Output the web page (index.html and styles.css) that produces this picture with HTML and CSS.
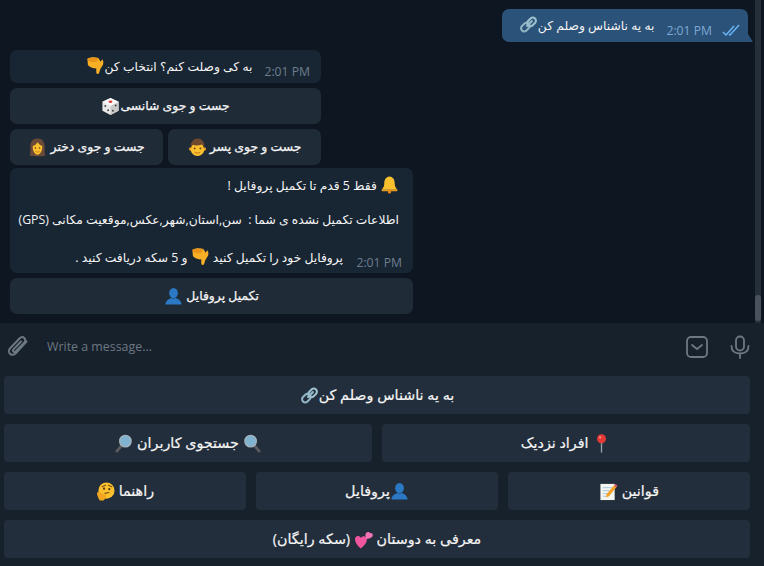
FILE: index.html
```html
<!DOCTYPE html>
<html lang="fa">
<head>
<meta charset="utf-8">
<title>Chat</title>
<link rel="stylesheet" href="styles.css">
</head>
<body>
<svg class="defs" width="0" height="0" aria-hidden="true">
  <defs>
    <symbol id="e-link" viewBox="0 0 20 20">
      <g fill="none" stroke-linecap="round">
        <path d="M8.5 11.5 L13.5 6.5" stroke="#8fb4c4" stroke-width="2.4"/>
        <rect x="1.7" y="9.5" width="10" height="6.6" rx="3.3" transform="rotate(-45 6.7 12.8)" stroke="#8fb4c4" stroke-width="2.2"/>
        <rect x="8.3" y="3.9" width="10" height="6.6" rx="3.3" transform="rotate(-45 13.3 7.2)" stroke="#9cc0ce" stroke-width="2.2"/>
      </g>
    </symbol>
    <symbol id="e-down" viewBox="0 0 20 20">
      <path d="M1.500 3 C5 1 10 1 13 2 L15.500 6 L17 3.500 C18.500 5 18.500 7 18 9 L15 14 L13.800 18 C12.800 19.500 10.800 19 10.800 17 L10.800 13 C7 13.500 3.500 11.500 2 9.500 Z" fill="#f7b026"/>
      <path d="M1.500 3 C5 1.500 10 1.500 12.800 2.500 L11 6 C8 7 4.500 6.500 2 5 Z" fill="#e8941a"/>
    </symbol>
    <symbol id="e-dice" viewBox="0 0 20 20">
      <path d="M10 1 L18.500 5 L18.500 14.500 L10 19 L1.500 14.500 L1.500 5 Z" fill="#e8e8e8"/>
      <path d="M10 9.500 L18.500 5 L18.500 14.500 L10 19 Z" fill="#c9c9c9"/>
      <path d="M10 1 L18.500 5 L10 9.500 L1.500 5 Z" fill="#f7f7f7"/>
      <ellipse cx="10" cy="5" rx="2" ry="1.300" fill="#d8443c"/>
      <circle cx="4.500" cy="9.500" r="1" fill="#444"/><circle cx="7.500" cy="14" r="1" fill="#444"/>
      <circle cx="15.500" cy="9" r="1" fill="#444"/><circle cx="12.500" cy="14.500" r="1" fill="#444"/>
    </symbol>
    <symbol id="e-girl" viewBox="0 0 20 20">
      <path d="M10 .5 C5 .5 2.500 4 2.500 9 C2.500 13 2.500 16 2 18.500 C6 19.800 14 19.800 18 18.500 C17.500 16 17.500 13 17.500 9 C17.500 4 15 .5 10 .5 Z" fill="#6b4a38"/>
      <path d="M10 4.500 C11.500 6.500 13.500 8 15 8.500 C15.300 13.500 13 17.500 10 17.500 C7 17.500 4.700 13.500 5 8.500 C7 8 9 6.500 10 4.500 Z" fill="#fbc02d"/>
      <path d="M7.800 14 C9 15 11 15 12.200 14" stroke="#b5651d" stroke-width=".8" fill="none"/>
      <circle cx="7.800" cy="10.500" r=".8" fill="#5c3a10"/><circle cx="12.200" cy="10.500" r=".8" fill="#5c3a10"/>
    </symbol>
    <symbol id="e-boy" viewBox="0 0 20 20">
      <circle cx="2.800" cy="11.500" r="1.800" fill="#f2a51f"/><circle cx="17.200" cy="11.500" r="1.800" fill="#f2a51f"/>
      <ellipse cx="10" cy="11.500" rx="7.200" ry="7.500" fill="#fbc02d"/>
      <path d="M3 11 C2 4 6 .5 10.500 .5 C15 .5 18 5 17 11 C16 9.500 15.800 8 14.800 6.800 C11 8.200 7 8 5 7.200 C4 8.500 3.800 9.500 3 11 Z" fill="#70492f"/>
      <circle cx="7" cy="11" r=".9" fill="#5c3a10"/><circle cx="13" cy="11" r=".9" fill="#5c3a10"/>
      <path d="M7 15 C8.500 16.200 11.500 16.200 13 15" stroke="#b5651d" stroke-width=".9" fill="none"/>
    </symbol>
    <symbol id="e-bell" viewBox="0 0 20 20">
      <path d="M10 1.500 C6 2 4.500 5 4.500 9 C4.500 12 3.500 14 1.500 15.500 L18.500 15.500 C16.500 14 15.500 12 15.500 9 C15.500 5 14 2 10 1.500 Z" fill="#fbc02d"/>
      <path d="M1.500 15.500 L18.500 15.500 L18 17 L2 17 Z" fill="#e89a1c"/>
      <circle cx="10" cy="17.800" r="1.800" fill="#e0851a"/>
    </symbol>
    <symbol id="e-user" viewBox="0 0 20 20">
      <ellipse cx="10" cy="6.500" rx="4.600" ry="5.500" fill="#2b78c5"/>
      <path d="M1.500 18.500 C1.500 14.500 5 12.500 7.500 11.500 C9 12.500 11 12.500 12.500 11.500 C15 12.500 18.500 14.500 18.500 18.500 Z" fill="#2b78c5"/>
    </symbol>
    <symbol id="e-pin" viewBox="0 0 20 20">
      <path d="M10 9 L10 19.500" stroke="#9aa4ab" stroke-width="1.400"/>
      <circle cx="10" cy="5" r="4.700" fill="#e53935"/>
      <circle cx="8.500" cy="3.500" r="1.200" fill="#f29a94"/>
    </symbol>
    <symbol id="e-lens-l" viewBox="0 0 20 20">
      <path d="M9 11 L3 18" stroke="#5b5b5b" stroke-width="3" stroke-linecap="round"/>
      <circle cx="12" cy="7.500" r="6" fill="#7fb3d0" stroke="#a7b4bb" stroke-width="1.400"/>
    </symbol>
    <symbol id="e-lens-r" viewBox="0 0 20 20">
      <path d="M11 11 L17 18" stroke="#5b5b5b" stroke-width="3" stroke-linecap="round"/>
      <circle cx="8" cy="7.500" r="6" fill="#7fb3d0" stroke="#a7b4bb" stroke-width="1.400"/>
    </symbol>
    <symbol id="e-memo" viewBox="0 0 20 20">
      <rect x="1.500" y="2" width="15" height="17" fill="#f5f5f0"/>
      <path d="M4 6 H14 M4 9 H11 M4 12 H9 M4 15 H8" stroke="#9fc0d8" stroke-width=".9"/>
      <path d="M8 13 L15.800 3.500 L18.300 5.500 L10.500 15 L7.500 16.200 Z" fill="#f4a12a"/>
      <path d="M15.800 3.500 L17 2 L19.500 4 L18.300 5.500 Z" fill="#e0607a"/>
    </symbol>
    <symbol id="e-think" viewBox="0 0 20 20">
      <circle cx="11" cy="9" r="8.500" fill="#fbc02d"/>
      <path d="M6.500 5 L10 3.500 M13 3.500 L16.500 5" stroke="#7a4f14" stroke-width="1.200" stroke-linecap="round"/>
      <circle cx="8.500" cy="7" r="1.200" fill="#5c3a10"/><circle cx="14" cy="7.500" r="1.200" fill="#5c3a10"/>
      <path d="M9 12 L14 11" stroke="#7a4f14" stroke-width="1.200"/>
      <path d="M1 11 C4 10 6 12 8 13 L11 14 L10 17 L8 19.500 L4 19.500 C2.500 17 1 14 1 11 Z" fill="#f2a51f"/>
    </symbol>
    <symbol id="e-hearts" viewBox="0 0 20 20">
      <path d="M7 19.500 C2.500 15.500 .5 12 1.200 8.800 C2 6 5.500 5.500 7.200 8.200 C9 5.500 13 6.200 13.500 9.500 C14 12.800 11 16.500 7 19.500 Z" fill="#f0559f"/>
      <path d="M13 9.500 C11.500 6.500 11.800 3.800 13 2.800 C14.500 1.500 16.300 2 16.800 3.500 C18 2.500 19.800 3.500 19.800 5.200 C19.800 7.500 17 9 13 9.500 Z" fill="#f472b6"/>
    </symbol>
  </defs>
</svg>

<main class="app">
  <section class="chat">
    <div class="history">
      <div class="row-out">
        <div class="bubble out">
          <span class="text" dir="rtl">به یه ناشناس وصلم کن<svg class="emoji"><use href="#e-link"/></svg></span>
          <span class="time t-out">2:01 PM</span>
          <svg class="ticks" viewBox="0 0 18 12" width="18" height="12"><path d="M1 8 L4 11 L12 2 M7 10 L8 11 L17 1" fill="none" stroke="#6ab3f3" stroke-width="1.500"/></svg>
        </div>
      </div>

      <div class="group narrow">
        <div class="bubble in">
          <span class="text" dir="rtl">به کی وصلت کنم؟ انتخاب کن<svg class="emoji"><use href="#e-down"/></svg></span>
          <span class="time">2:01 PM</span>
        </div>
        <div class="inline-btn" dir="rtl">جست و جوی شانسی<svg class="emoji"><use href="#e-dice"/></svg></div>
        <div class="inline-row">
          <div class="inline-btn" dir="rtl">جست و جوی دختر <svg class="emoji"><use href="#e-girl"/></svg></div>
          <div class="inline-btn" dir="rtl">جست و جوی پسر <svg class="emoji"><use href="#e-boy"/></svg></div>
        </div>
      </div>

      <div class="group wide">
        <div class="bubble in multi" dir="rtl">
          <p class="line"><svg class="emoji"><use href="#e-bell"/></svg> فقط 5 قدم تا تکمیل پروفایل !</p>
          <p class="line">اطلاعات تکمیل نشده ی شما :&nbsp; سن,استان,شهر,عکس,موقعیت مکانی (GPS)</p>
          <p class="line last"><span>پروفایل خود را تکمیل کنید <svg class="emoji"><use href="#e-down"/></svg> و 5 سکه دریافت کنید .</span></p>
          <span class="time t-multi" dir="ltr">2:01 PM</span>
        </div>
        <div class="inline-btn" dir="rtl">تکمیل پروفایل <svg class="emoji"><use href="#e-user"/></svg></div>
      </div>
    </div>
    <div class="scrollbar"><div class="thumb"></div></div>
  </section>

  <section class="composer">
    <svg class="clip" viewBox="0 0 24 24" width="24" height="24"><path d="M20.500 6.500 L9.500 18.500 C8 20 5.500 20.300 4 18.800 C2.500 17.300 2.700 14.800 4.200 13.300 L13.700 3.300 C15 2 17 1.800 18.300 3 C19.600 4.200 19.500 6.300 18.200 7.600 L9.600 16.500 C9 17.100 8 17.200 7.400 16.600 C6.800 16 6.900 15 7.500 14.400 L15 6.500" fill="none" stroke="#6c7883" stroke-width="2" stroke-linecap="round"/></svg>
    <span class="placeholder">Write a message...</span>
    <svg class="kbd" viewBox="0 0 22 22" width="22" height="22"><rect x="1" y="1" width="20" height="20" rx="4" fill="none" stroke="#6c7883" stroke-width="1.800"/><path d="M6 9 L11 13 L16 9" fill="none" stroke="#6c7883" stroke-width="1.800" stroke-linecap="round"/></svg>
    <svg class="mic" viewBox="0 0 20 24" width="20" height="24"><rect x="6" y="1.500" width="8" height="14" rx="4" fill="none" stroke="#6c7883" stroke-width="1.800"/><path d="M1.500 11 C1.500 16 5 18.500 10 18.500 C15 18.500 18.500 16 18.500 11 M10 18.500 V23" fill="none" stroke="#6c7883" stroke-width="1.800" stroke-linecap="round"/></svg>
  </section>

  <section class="keyboard" dir="rtl">
    <div class="key-row"><div class="key">به یه ناشناس وصلم کن<svg class="emoji"><use href="#e-link"/></svg></div></div>
    <div class="key-row">
      <div class="key"><svg class="emoji"><use href="#e-pin"/></svg> افراد نزدیک</div>
      <div class="key"><svg class="emoji"><use href="#e-lens-r"/></svg> جستجوی کاربران <svg class="emoji"><use href="#e-lens-l"/></svg></div>
    </div>
    <div class="key-row">
      <div class="key">قوانین <svg class="emoji"><use href="#e-memo"/></svg></div>
      <div class="key"><svg class="emoji"><use href="#e-user"/></svg>پروفایل</div>
      <div class="key">راهنما <svg class="emoji"><use href="#e-think"/></svg></div>
    </div>
    <div class="key-row"><div class="key">معرفی به دوستان <svg class="emoji"><use href="#e-hearts"/></svg> (سکه رایگان)</div></div>
  </section>
</main>
</body>
</html>
```

FILE: styles.css
```css
* { box-sizing: border-box; }
html, body { margin: 0; height: 100%; }
body {
  background: #17212b;
  color: #f5f5f5;
  font: 12.3px/18px "Open Sans", "DejaVu Sans", sans-serif;
  overflow: hidden;
}
.defs { position: absolute; }
.app { width: 764px; height: 566px; display: flex; flex-direction: column; }

.chat { height: 323px; background: #0e1621; display: flex; flex: none; overflow: hidden; }
.history { flex: 1; padding: 9px 0 0 10px; display: flex; flex-direction: column; }
.scrollbar { width: 6px; margin-right: 3px; background: #252f3a; display: flex; flex-direction: column; justify-content: flex-end; padding-bottom: 2px; }
.thumb { height: 26px; background: #4a535d; border-radius: 3px; }

.row-out { display: flex; justify-content: flex-end; padding-right: 7px; margin-bottom: 8px; }
.group { display: flex; flex-direction: column; gap: 5px; margin-bottom: 3px; }
.narrow { width: 311px; }
.wide { width: 403px; }

.bubble { border-radius: 7px; position: relative; }
.in { background: #182533; display: flex; justify-content: flex-end; align-items: flex-end; padding: 7px 11px 3px 0; height: 33px; }
.out {
  width: 246px; height: 33px; background: #2b5278; border-radius: 7px 7px 0 7px;
  display: flex; align-items: flex-end; justify-content: flex-end; padding: 0 8px 3px 14px;
}
.out::after {
  content: ""; position: absolute; right: -5px; bottom: 0;
  width: 5px; height: 8px; background: #2b5278;
  clip-path: polygon(0 0, 0 100%, 100% 100%);
}
.text { flex: none; line-height: 20px; white-space: nowrap; margin-bottom: 3px; }
.time { color: #6d7f8f; font-size: 12.2px; line-height: 16px; white-space: nowrap; }
.in .time { margin-left: 12px; }
.t-out { color: #7da8d3; margin-left: 12px; }
.ticks { margin: 0 0 3px 10px; }
.emoji { width: 19px; height: 19px; vertical-align: -4px; }

.inline-btn {
  height: 36px; background: #202b38; border-radius: 7px;
  font-size: 12.4px; -webkit-text-stroke: 0.25px #f5f5f5;
  display: flex; align-items: center; justify-content: center; flex: 1; white-space: pre-wrap;
}
.narrow > .inline-btn { flex: none; }
.wide > .inline-btn { flex: none; }
.inline-row { display: flex; gap: 5px; direction: ltr; }

.multi { display: block; height: 105px; padding: 7px 14px 0 11px; background: #182533; }
.line { margin: 0 0 18px; line-height: 18px; height: 18px; white-space: nowrap; }
.line.last { margin: 1px 0 0; padding-right: 56px; }
.t-multi { position: absolute; right: 11px; bottom: 2px; }

.composer {
  height: 47px; flex: none; display: flex; align-items: center; padding: 0 14px 0 6px;
}
.clip { flex: none; }
.placeholder { flex: 1; margin-left: 17px; color: #6c7883; font-size: 12.4px; }
.kbd { margin-right: 22px; }

.keyboard { flex: 1; padding: 6px 14px 8px 4px; display: flex; flex-direction: column; gap: 10px; direction: rtl; }
.key-row { display: flex; gap: 10px; height: 38px; }
.key {
  flex: 1 1 0; background: #232e3c; border-radius: 4px; font-size: 14.3px;
  -webkit-text-stroke: 0.2px #f5f5f5;
  display: flex; align-items: center; justify-content: center; white-space: pre-wrap;
}
```
